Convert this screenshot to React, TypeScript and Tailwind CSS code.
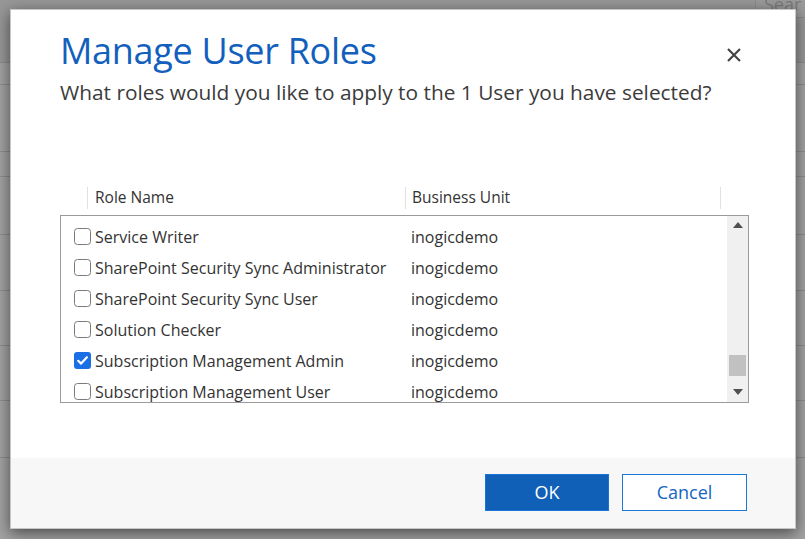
import React from "react";

const rows = [
  { name: "Service Writer", checked: false },
  { name: "SharePoint Security Sync Administrator", checked: false },
  { name: "SharePoint Security Sync User", checked: false },
  { name: "Solution Checker", checked: false },
  { name: "Subscription Management Admin", checked: true },
  { name: "Subscription Management User", checked: false },
];

const bgLines = [62, 84, 151, 176, 234, 290, 345, 400, 457];

function Checkbox({ checked }: { checked: boolean }) {
  if (checked) {
    return (
      <div className="w-[17px] h-[17px] rounded-[3px] bg-[#1b6fe4] flex items-center justify-center shrink-0">
        <svg width="13" height="13" viewBox="0 0 13 13">
          <path d="M2.2 6.8 L5.1 9.6 L10.9 3.2" fill="none" stroke="white" strokeWidth="2.2" strokeLinecap="round" strokeLinejoin="round" />
        </svg>
      </div>
    );
  }
  return <div className="w-[17px] h-[17px] rounded-[3.5px] border-[1.5px] border-[#7a7a7a] bg-white shrink-0" />;
}

export default function App() {
  return (
    <div
      className="relative w-[805px] h-[539px] overflow-hidden bg-[#a2a2a2]"
      style={{ fontFamily: '"Open Sans", "Noto Sans", sans-serif' }}
    >
      {/* background page */}
      <div className="absolute inset-0">
        <div className="h-[62px] bg-[#979797]" />
        {bgLines.map((y) => (
          <div key={y} className="absolute left-0 right-0 h-px bg-[#8c8c8c]" style={{ top: y }} />
        ))}
        <div className="absolute left-[755px] top-[-8px] w-[60px] h-[26px] border border-[#8a8a8a] bg-[#9a9a9a] text-[18px] text-[#7a7a7a] pl-[8px] leading-[22px] overflow-hidden whitespace-nowrap">
          Sear
        </div>
      </div>

      {/* dialog */}
      <div className="absolute left-[10px] top-[9px] w-[786px] h-[520px] bg-white border border-[#c6c6c6] shadow-[0_4px_14px_rgba(0,0,0,0.55)] flex flex-col">
        <div className="relative px-[49px] pt-[18px]">
          <div className="text-[36px] leading-[46px] text-[#135fbd] tracking-[-0.3px]">Manage User Roles</div>
          <div className="text-[20.85px] leading-[28px] text-[#3b3b3b] mt-[4px] whitespace-nowrap">
            What roles would you like to apply to the 1 User you have selected?
          </div>
          <button className="absolute right-[52px] top-[36px] w-[18px] h-[18px] flex items-center justify-center">
            <svg width="16" height="16" viewBox="0 0 16 16">
              <path d="M2 2 L14 14 M14 2 L2 14" stroke="#444" strokeWidth="2.2" />
            </svg>
          </button>
        </div>

        <div className="pl-[49px] pr-[46px] mt-[74px] flex-1">
          {/* header */}
          <div className="h-[35px] flex items-center text-[15.5px] text-[#333]">
            <div className="w-[27px]" />
            <div className="w-px h-[22px] bg-[#e1e1e1]" />
            <div className="w-[317px] pl-[7px]">Role Name</div>
            <div className="w-px h-[22px] bg-[#e1e1e1]" />
            <div className="w-[314px] pl-[6px]">Business Unit</div>
            <div className="w-px h-[22px] bg-[#e1e1e1]" />
          </div>
          {/* list */}
          <div className="h-[188px] border border-[#9b9b9b] flex">
            <div className="flex-1 overflow-hidden pt-[5px]">
              {rows.map((r) => (
                <div key={r.name} className="h-[31px] flex items-center text-[16px] text-[#333] shrink-0">
                  <div className="w-[13px]" />
                  <Checkbox checked={r.checked} />
                  <div className="w-[319px] pl-[4px] whitespace-nowrap">{r.name}</div>
                  <div className="pl-[1px]">inogicdemo</div>
                </div>
              ))}
            </div>
            <div className="w-[21px] bg-[#f0f0f0] flex flex-col items-center">
              <svg width="10" height="6" viewBox="0 0 10 6" className="mt-[6px]">
                <path d="M0 6 L5 0 L10 6 Z" fill="#505050" />
              </svg>
              <div className="flex-1" />
              <div className="w-[17px] h-[21px] bg-[#c1c1c1] mb-[13px]" />
              <svg width="10" height="6" viewBox="0 0 10 6" className="mb-[7px]">
                <path d="M0 0 L5 6 L10 0 Z" fill="#505050" />
              </svg>
            </div>
          </div>
        </div>

        <div className="h-[70px] bg-[#f7f7f7] flex justify-end items-start pt-[16px] pr-[48px] gap-[13px]">
          <button className="w-[124px] h-[37px] bg-[#1160b8] border border-[#1a73d6] text-white text-[18px]">OK</button>
          <button className="w-[125px] h-[37px] bg-white border border-[#1a78d8] text-[#1466c4] text-[18px]">Cancel</button>
        </div>
      </div>
    </div>
  );
}
